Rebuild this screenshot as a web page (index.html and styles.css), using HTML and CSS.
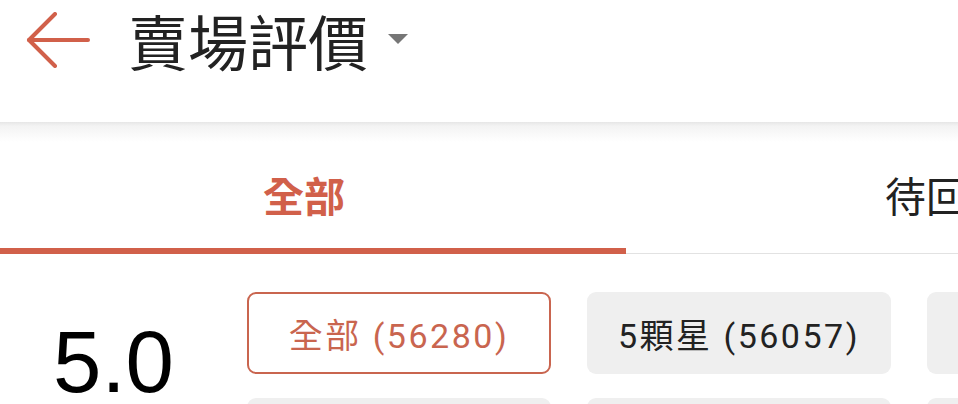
FILE: index.html
```html
<!DOCTYPE html>
<html lang="zh-Hant">

<head>
  <meta charset="UTF-8" />
  <meta name="viewport" content="width=device-width, initial-scale=1.0" />
  <title>賣場評價</title>
  <link rel="stylesheet" href="styles.css">
</head>

<body>
  <header class="header">
    <button class="back-btn" aria-label="返回">
      <svg width="64" height="56" viewBox="0 0 64 56" fill="none" stroke="#d1604a" stroke-width="4" stroke-linecap="round" stroke-linejoin="round">
        <path d="M62 28 H3" />
        <path d="M29 2 L3 28 L29 54" />
      </svg>
    </button>
    <h1 class="title">賣場評價</h1>
    <span class="caret"></span>
  </header>

  <nav class="tabs">
    <div class="tab tab-all active">全部</div>
    <div class="tab tab-pending">待回覆</div>
  </nav>

  <section class="rating">
    <div class="score">5.0</div>
    <div class="chips">
      <button class="chip selected">全部 (56280)</button>
      <button class="chip">5顆星 (56057)</button>
      <button class="chip">4顆星 (176)</button>
      <button class="chip">3顆星 (31)</button>
      <button class="chip">2顆星 (6)</button>
      <button class="chip">1顆星 (10)</button>
    </div>
  </section>
</body>

</html>
```

FILE: styles.css
```css
html,
body {
  margin: 0;
  overflow: hidden;
  background: #fff;
}

body {
  width: 958px;
  font-family: Roboto, "Noto Sans CJK TC", sans-serif;
  color: #222;
}

.header {
  height: 122px;
  box-sizing: border-box;
  display: flex;
  align-items: flex-start;
  padding: 12px 0 0 26px;
}

.back-btn {
  border: none;
  background: none;
  padding: 0;
  width: 64px;
  height: 56px;
  cursor: pointer;
}

.back-btn svg {
  display: block;
}

.title {
  margin: 0 0 0 38px;
  font-family: "Noto Sans CJK TC", sans-serif;
  font-weight: 400;
  font-size: 60px;
  line-height: 56px;
  color: #222;
}

.caret {
  margin: 22px 0 0 20px;
  width: 0;
  height: 0;
  border-left: 10px solid transparent;
  border-right: 10px solid transparent;
  border-top: 10px solid #767676;
}

.tabs {
  display: flex;
  width: 1252px;
  border-bottom: 1px solid #e2e2e2;
  background: linear-gradient(to bottom, #e6e6e6 0, #f3f3f3 4px, #fff 20px);
}

.tab {
  flex: none;
  width: 626px;
  height: 132px;
  box-sizing: border-box;
  padding-top: 17px;
  margin-bottom: -1px;
  border-bottom: 6px solid transparent;
  display: flex;
  align-items: center;
  font-family: "Noto Sans CJK TC", sans-serif;
  font-size: 41px;
  color: #222;
}

.tab-all {
  padding-left: 263px;
}

.tab-pending {
  padding-left: 259px;
}

.tab.active {
  color: #d1604a;
  font-weight: 700;
  border-bottom-color: #d1604a;
}

.rating {
  display: flex;
  padding-top: 38px;
}

.score {
  flex: none;
  width: 247px;
  box-sizing: border-box;
  padding-left: 53px;
  margin-top: 26px;
  font-family: "Liberation Sans", Arial, sans-serif;
  font-size: 87px;
  line-height: 1;
  color: #000;
}

.chips {
  display: grid;
  grid-template-columns: repeat(3, 304px);
  gap: 24px 36px;
}

.chip {
  height: 82px;
  box-sizing: border-box;
  border: 2px solid transparent;
  border-radius: 9px;
  background: #efefef;
  display: flex;
  align-items: center;
  justify-content: center;
  font-family: Roboto, "Noto Sans CJK TC", sans-serif;
  font-size: 34px;
  letter-spacing: 2.5px;
  color: #222;
  cursor: pointer;
}

.chip.selected {
  background: #fff;
  border-color: #c9654f;
  color: #c9654f;
}
```
